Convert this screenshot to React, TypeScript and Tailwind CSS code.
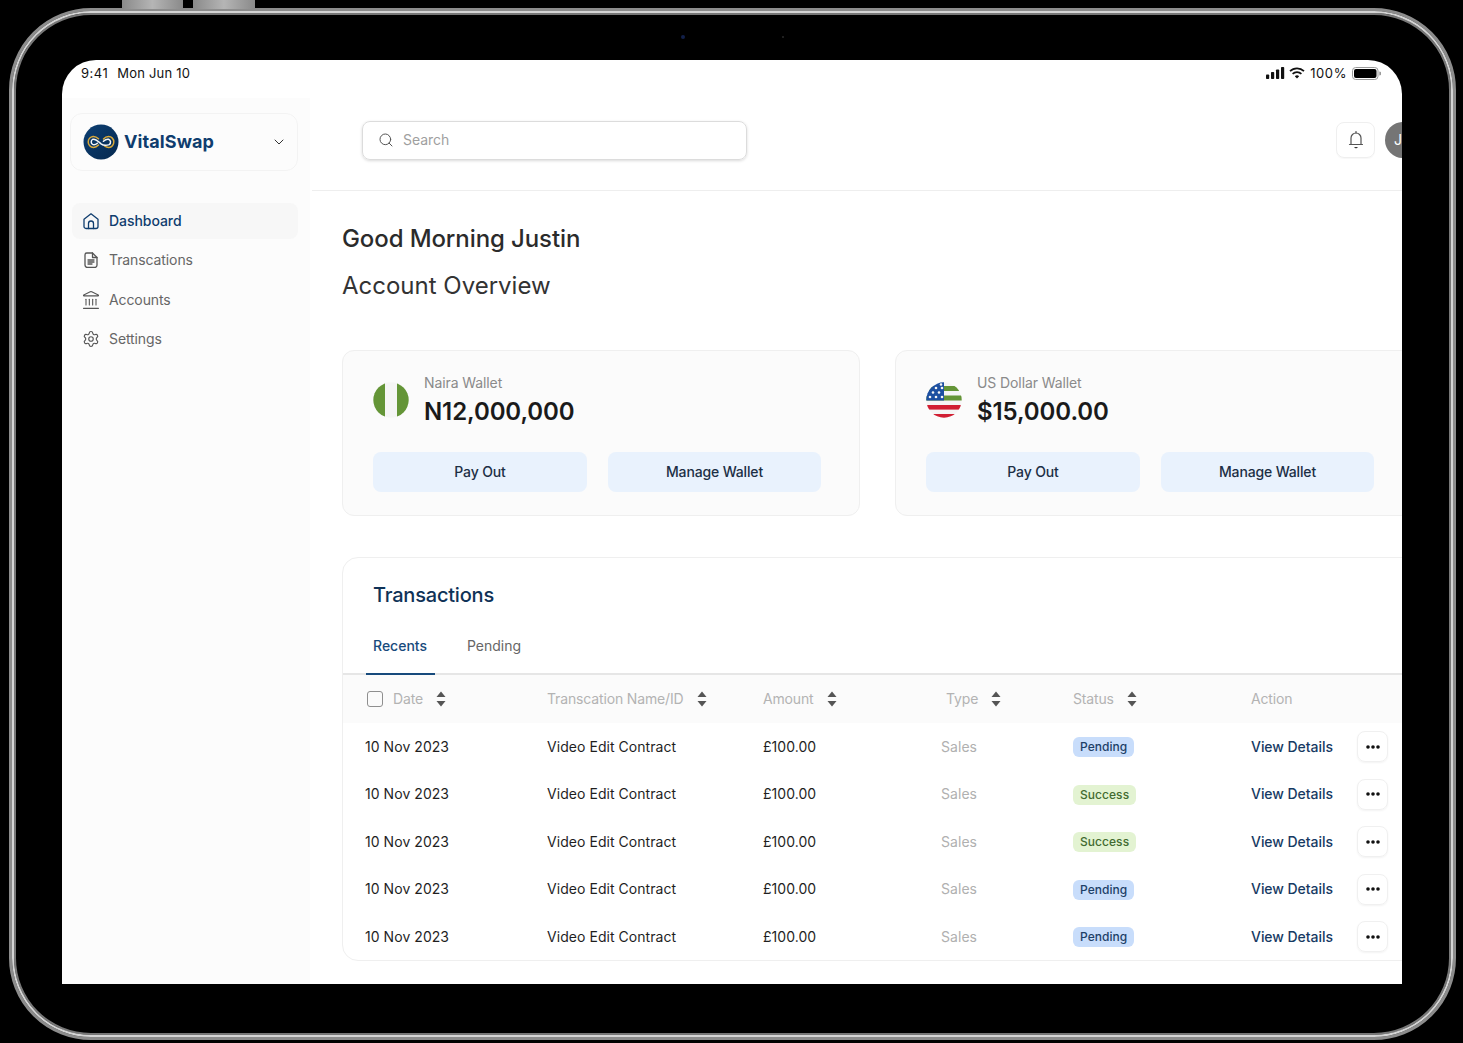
import { Search, ChevronDown, Landmark, Settings } from "lucide-react";

const Sort = () => (
  <svg width="10" height="16" viewBox="0 0 10 16" className="shrink-0">
    <path d="M5 0.5 L9.5 6 H0.5 Z" fill="#555" />
    <path d="M5 15.5 L9.5 10 H0.5 Z" fill="#555" />
  </svg>
);

const HomeIcon = () => (
  <svg width="18" height="18" viewBox="0 0 18 18" fill="none" stroke="#0f3d6e" strokeWidth="1.3" strokeLinejoin="round" strokeLinecap="round">
    <path d="M2 7.2 L9 1.8 L16 7.2 V14.5 A2 2 0 0 1 14 16.5 H4 A2 2 0 0 1 2 14.5 Z" />
    <path d="M6.5 16.5 V11.5 A2.5 2.5 0 0 1 11.5 11.5 V16.5" />
  </svg>
);

const DocIcon = () => (
  <svg width="18" height="18" viewBox="0 0 18 18" fill="none" stroke="#555" strokeWidth="1.3" strokeLinejoin="round" strokeLinecap="round">
    <path d="M4.8 2 H10.5 L15 6.5 V14 A2.4 2.4 0 0 1 12.6 16.4 H5.4 A2.4 2.4 0 0 1 3 14 V3.8 A1.8 1.8 0 0 1 4.8 2 Z" />
    <path d="M10.5 2 V6.5 H15" />
    <path d="M6 9 H12 M6 11 H12 M6 13 H10" />
  </svg>
);

const BellIcon = () => (
  <svg width="18" height="20" viewBox="0 0 18 20" fill="none" stroke="#555" strokeWidth="1.2" strokeLinecap="round" strokeLinejoin="round">
    <path d="M9 1.5 V3" />
    <path d="M4 14 V8 A5 5 0 0 1 14 8 V14" />
    <path d="M2.5 14.5 H15.5" />
    <path d="M6.8 17 H11.2 L9 18.6 Z" fill="#333" stroke="none" />
  </svg>
);

const Logo = () => (
  <svg width="36" height="36" viewBox="0 0 36 36" fill="none">
    <defs>
      <linearGradient id="lg" x1="0" y1="0" x2="1" y2="1">
        <stop offset="0" stopColor="#0d3f73" />
        <stop offset="1" stopColor="#06294f" />
      </linearGradient>
    </defs>
    <circle cx="18" cy="18" r="17.5" fill="url(#lg)" />
    <path d="M15.5 14.8 C14 13.4 12 12.3 10 12.5 C7.3 12.8 5.2 15.2 5.2 18 C5.2 20.9 7.4 23.4 10.5 23.4 C12.6 23.4 14.2 22.4 15.5 21" stroke="#d9a93a" strokeWidth="1.5" strokeLinecap="round" />
    <path d="M20.5 15 C21.8 13.5 23.4 12.5 25.6 12.5 C28.6 12.5 30.8 15 30.8 18 C30.8 20.9 28.7 23.4 26 23.4 C24.2 23.5 22.8 22.8 21.5 21.8" stroke="#d9a93a" strokeWidth="1.5" strokeLinecap="round" />
    <path d="M10 15.2 C13 15 15.5 17.5 18 19.8 C20.5 21.8 23.5 21.6 26.2 20.6 C28.4 19 27.8 16 25.5 15.2 C23.5 14.8 22 15.8 20.4 17.2 M10 15.2 C7.6 16.4 7.6 19.6 10 20.6 C11.5 21 13 20.4 14.4 19.2" stroke="#f4f6f8" strokeWidth="1.5" strokeLinecap="round" />
  </svg>
);

const NgFlag = () => (
  <svg width="36" height="36" viewBox="0 0 36 36" className="shrink-0">
    <defs>
      <clipPath id="ngc"><circle cx="18" cy="18" r="17.7" /></clipPath>
    </defs>
    <g clipPath="url(#ngc)">
      <rect x="0" y="0" width="12" height="36" fill="#649537" />
      <rect x="12" y="0" width="12" height="36" fill="#f5f5f5" />
      <rect x="24" y="0" width="12" height="36" fill="#649537" />
    </g>
  </svg>
);

const UsFlag = () => {
  const stars = [
    [4, 15], [10, 15], [16, 15],
    [7, 10.5], [13, 10.5],
    [10, 6], [16, 6], [15, 2.5],
  ];
  return (
    <svg width="36" height="36" viewBox="0 0 36 36" className="shrink-0">
      <defs>
        <clipPath id="usc"><circle cx="18" cy="18" r="17.7" /></clipPath>
      </defs>
      <g clipPath="url(#usc)">
        <rect x="0" y="0" width="36" height="36" fill="#f5f5f5" />
        <rect x="0" y="4" width="36" height="5" fill="#649537" />
        <rect x="0" y="13.5" width="36" height="5" fill="#649537" />
        <rect x="0" y="23" width="36" height="4.6" fill="#d11f33" />
        <rect x="0" y="32" width="36" height="4" fill="#d11f33" />
        <rect x="0" y="0" width="18" height="18.5" fill="#1c4fa1" />
        {stars.map(([x, y], i) => (
          <circle key={i} cx={x} cy={y} r="1.3" fill="#f5f5f5" />
        ))}
      </g>
    </svg>
  );
};

const navItems = [
  { label: "Transcations", icon: <DocIcon /> },
  { label: "Accounts", icon: <Landmark size={20} strokeWidth={1.3} color="#555" className="mx-[-1px]" /> },
  { label: "Settings", icon: <Settings size={18} strokeWidth={1.5} color="#555" /> },
];

const Wallet = ({ flag, label, amount }: { flag: React.ReactNode; label: string; amount: string }) => (
  <div className="w-[518px] h-[166px] shrink-0 rounded-xl border border-[#efefef] bg-[#fbfbfb] pl-[30px] pt-[22px]">
    <div className="flex items-start">
      <div className="mt-[-4px] pt-[13px]">{flag}</div>
      <div className="ml-[15px]">
        <div className="text-sm leading-5 text-[#8a8a8a] tracking-[-0.1px]">{label}</div>
        <div className="mt-[3px] text-2xl leading-8 font-semibold text-[#1a1a1a] tracking-[-0.1px]">{amount}</div>
      </div>
    </div>
    <div className="mt-[24px] flex gap-[20px]">
      <div className="w-[214px] h-[40px] rounded-lg bg-[#e9f2fd] flex items-center justify-center text-sm font-medium text-[#1c2f45] tracking-[-0.15px]">Pay Out</div>
      <div className="w-[213px] ml-[1px] h-[40px] rounded-lg bg-[#e9f2fd] flex items-center justify-center text-sm font-medium text-[#1c2f45] tracking-[-0.15px]">Manage Wallet</div>
    </div>
  </div>
);

const cols = "grid grid-cols-[182px_216px_178px_132px_178px_150px] items-center pl-[22px]";

const Th = ({ children, sort = true, className = "" }: { children: React.ReactNode; sort?: boolean; className?: string }) => (
  <div className={`flex items-center text-sm text-[#b3b3b3] tracking-[-0.15px] ${className}`}>
    <span>{children}</span>
    {sort && <span className="ml-[13px] flex"><Sort /></span>}
  </div>
);

const rows = ["Pending", "Success", "Success", "Pending", "Pending"];

export default function App() {
  return (
    <div className="relative w-[1463px] h-[1043px] bg-black overflow-hidden" style={{ fontFamily: "Inter, 'Liberation Sans', sans-serif" }}>
      <div className="absolute left-[122px] top-0 w-[61px] h-[9px] bg-gradient-to-r from-[#8a8a8a] via-[#b5b5b5] to-[#8a8a8a]" />
      <div className="absolute left-[193px] top-0 w-[62px] h-[9px] bg-gradient-to-r from-[#8a8a8a] via-[#b5b5b5] to-[#8a8a8a]" />
      <div className="absolute left-[681px] top-[35px] w-[4px] h-[4px] rounded-full bg-[#12204a]" />
      <div className="absolute left-[782px] top-[36px] w-[2px] h-[2px] rounded-full bg-[#2a2a2a]" />

      <div className="ml-[9px] mt-[8px] w-[1447px] h-[1032px] rounded-[82px] border-[3px] border-[#8c8c8c]">
        <div className="w-full h-full rounded-[79px] border-[2px] border-[#d4d4d4] shadow-[inset_0_0_0_2px_#777777] bg-black pl-[48px] pt-[47px]">
          <div className="w-[1340px] h-[924px] bg-white rounded-t-[34px] overflow-hidden flex flex-col">
            <div className="h-[38px] shrink-0 flex items-start justify-between pl-[19px] pr-[21px] pt-[5px] text-[13px] leading-4 text-[#111]">
              <div className="flex gap-[9px] tracking-[0.1px]"><span className="tracking-[0.5px]">9:41</span><span className="tracking-[0.2px]">Mon Jun 10</span></div>
              <div className="flex items-center gap-[4px]">
                <svg width="19" height="12" viewBox="0 0 19 12" fill="#111">
                  <rect x="0" y="7.5" width="3.2" height="4.5" rx="0.8" />
                  <rect x="5" y="5" width="3.2" height="7" rx="0.8" />
                  <rect x="10" y="2.5" width="3.2" height="9.5" rx="0.8" />
                  <rect x="15" y="0" width="3.2" height="12" rx="0.8" />
                </svg>
                <svg width="16" height="12" viewBox="0 0 16 12" fill="none" stroke="#111" strokeWidth="1.7">
                  <path d="M1 4.2 A10 10 0 0 1 15 4.2" />
                  <path d="M3.6 6.9 A6.4 6.4 0 0 1 12.4 6.9" />
                  <path d="M8 11.6 L5.8 9.2 A3.2 3.2 0 0 1 10.2 9.2 Z" fill="#111" stroke="none" />
                </svg>
                <span className="ml-[1px] tracking-[0.6px]">100%</span>
                <svg width="29" height="13" viewBox="0 0 29 13" className="ml-[1px]">
                  <rect x="0.5" y="0.5" width="25.5" height="12" rx="3.2" fill="none" stroke="#999" />
                  <rect x="2" y="2" width="22.5" height="9" rx="2" fill="#000" />
                  <path d="M27.3 4.5 V8.5 A2 2 0 0 0 27.3 4.5 Z" fill="#999" />
                </svg>
              </div>
            </div>

            <div className="flex-1 flex min-h-0">
              <aside className="w-[248px] shrink-0 bg-[#fcfcfc]">
                <div className="ml-[8px] mt-[15px] w-[228px] h-[58px] rounded-xl border border-[#f3f3f3] flex items-center pl-[12px] pr-[10px]">
                  <Logo />
                  <span className="ml-[5px] text-lg font-bold text-[#0f3d6e] tracking-[0.1px]">VitalSwap</span>
                  <ChevronDown size={16} color="#333" strokeWidth={1.5} className="ml-auto" />
                </div>
                <nav className="mt-[32px] ml-[10px] w-[226px] flex flex-col gap-[3.4px]">
                  <div className="h-[36px] rounded-lg bg-[#f7f7f7] flex items-center pl-[10px] gap-[9px] text-sm font-medium text-[#0f3d6e] tracking-[-0.05px]">
                    <HomeIcon />
                    <span>Dashboard</span>
                  </div>
                  {navItems.map((n) => (
                    <div key={n.label} className="h-[36px] flex items-center pl-[10px] gap-[9px] text-sm text-[#666] tracking-[-0.1px]">
                      {n.icon}
                      <span>{n.label}</span>
                    </div>
                  ))}
                </nav>
              </aside>

              <main className="flex-1 min-w-0 ml-[2px] overflow-hidden">
                <header className="h-[93px] border-b border-[#eeeeee] flex items-start pl-[50px] pt-[23px]">
                  <div className="w-[385px] h-[39px] shrink-0 rounded-lg border border-[#dcdcdc] shadow-[0_1px_3px_rgba(0,0,0,0.15)] flex items-center pl-[15px] pb-[1px] gap-[9px] text-sm text-[#9f9f9f] tracking-[-0.05px]">
                    <Search size={16} color="#555" strokeWidth={1.5} />
                    <span>Search</span>
                  </div>
                  <div className="ml-[589px] mt-[1px] w-[39px] h-[36px] shrink-0 rounded-lg border border-[#efefef] flex items-center justify-center shadow-[0_1px_1px_rgba(0,0,0,0.03)]">
                    <BellIcon />
                  </div>
                  <div className="ml-[10px] mt-[1px] w-[36px] h-[36px] shrink-0 rounded-full bg-[#757575] text-white text-sm flex items-center pl-[9px]">J</div>
                </header>

                <div className="pl-[30px] pt-[32px]">
                  <h1 className="text-2xl leading-8 font-medium text-[#2b2b2b] tracking-[-0.1px]">Good Morning Justin</h1>
                  <h2 className="mt-[15px] text-2xl leading-8 text-[#333]">Account Overview</h2>

                  <div className="mt-[48px] flex gap-[35px] w-[1100px]">
                    <Wallet flag={<NgFlag />} label="Naira Wallet" amount="N12,000,000" />
                    <Wallet flag={<UsFlag />} label="US Dollar Wallet" amount="$15,000.00" />
                  </div>

                  <section className="mt-[41px] w-[1100px] h-[404px] rounded-2xl border border-[#efefef] bg-white overflow-hidden">
                    <h3 className="ml-[30px] mt-[23px] text-xl leading-7 font-medium text-[#0f3257] tracking-[-0.2px]">Transactions</h3>
                    <div className="mt-[18px] h-[48px] border-b-2 border-[#e6e6e6] flex pl-[23px] text-sm">
                      <div className="w-[69px] h-[48px] pl-[7px] pt-[9px] border-b-2 border-[#174a7c] font-medium text-[#174a7c]">Recents</div>
                      <div className="ml-[32px] pt-[9px] text-[#666]">Pending</div>
                    </div>
                    <div className={`${cols} h-[48px] bg-[#fbfbfb]`}>
                      <div className="flex items-center">
                        <span className="w-[16px] h-[16px] rounded-[3px] border-[1.5px] border-[#8f8f8f] ml-[2px] mr-[10px]" />
                        <Th>Date</Th>
                      </div>
                      <Th>Transcation Name/ID</Th>
                      <Th>Amount</Th>
                      <Th className="ml-[5px]">Type</Th>
                      <Th>Status</Th>
                      <Th sort={false}>Action</Th>
                    </div>
                    {rows.map((s, i) => (
                      <div key={i} className={`${cols} h-[47.5px] text-sm text-[#1f1f1f] tracking-[0.05px]`}>
                        <div>10 Nov 2023</div>
                        <div>Video Edit Contract</div>
                        <div>£100.00</div>
                        <div className="text-[#b0b0b0]">Sales</div>
                        <div>
                          {s === "Pending" ? (
                            <span className="inline-flex h-[20px] px-[7px] items-center rounded-md bg-[#c8ddfb] text-xs font-medium text-[#1d4068]">Pending</span>
                          ) : (
                            <span className="inline-flex h-[20px] px-[7px] items-center rounded-md bg-[#e3f3d2] text-xs font-medium text-[#426b30]">Success</span>
                          )}
                        </div>
                        <div className="flex items-center justify-between w-[137px]">
                          <span className="font-medium text-[#163a63] tracking-[-0.05px]">View Details</span>
                          <span className="w-[31px] h-[31px] rounded-lg border border-[#f0f0f0] shadow-[0_1px_2px_rgba(0,0,0,0.05)] flex items-center justify-center">
                            <svg width="14" height="4" viewBox="0 0 14 4" fill="#111">
                              <circle cx="2" cy="2" r="1.8" />
                              <circle cx="7" cy="2" r="1.8" />
                              <circle cx="12" cy="2" r="1.8" />
                            </svg>
                          </span>
                        </div>
                      </div>
                    ))}
                  </section>
                </div>
              </main>
            </div>
          </div>
        </div>
      </div>
    </div>
  );
}
